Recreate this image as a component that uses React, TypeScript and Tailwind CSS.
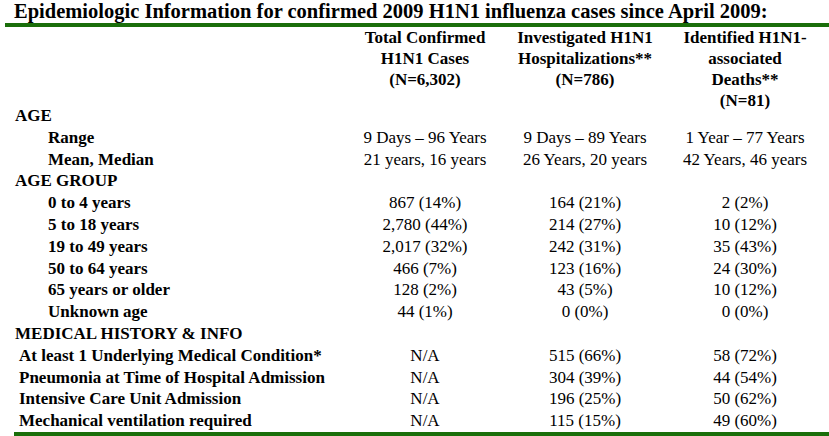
const columns = [
  { lines: ["Total Confirmed", "H1N1 Cases", "(N=6,302)"] },
  { lines: ["Investigated H1N1", "Hospitalizations**", "(N=786)"] },
  { lines: ["Identified H1N1-", "associated", "Deaths**", "(N=81)"] },
];

type Row = { label: string; kind: "section" | "sub" | "item"; values?: string[] };

const rows: Row[] = [
  { label: "AGE", kind: "section" },
  { label: "Range", kind: "sub", values: ["9 Days – 96 Years", "9 Days – 89 Years", "1 Year – 77 Years"] },
  { label: "Mean, Median", kind: "sub", values: ["21 years, 16 years", "26 Years, 20 years", "42 Years, 46 years"] },
  { label: "AGE GROUP", kind: "section" },
  { label: "0 to 4 years", kind: "sub", values: ["867 (14%)", "164 (21%)", "2 (2%)"] },
  { label: "5 to 18 years", kind: "sub", values: ["2,780 (44%)", "214 (27%)", "10 (12%)"] },
  { label: "19 to 49 years", kind: "sub", values: ["2,017 (32%)", "242 (31%)", "35 (43%)"] },
  { label: "50 to 64 years", kind: "sub", values: ["466 (7%)", "123 (16%)", "24 (30%)"] },
  { label: "65 years or older", kind: "sub", values: ["128 (2%)", "43 (5%)", "10 (12%)"] },
  { label: "Unknown age", kind: "sub", values: ["44 (1%)", "0 (0%)", "0 (0%)"] },
  { label: "MEDICAL HISTORY & INFO", kind: "section" },
  { label: "At least 1 Underlying Medical Condition*", kind: "item", values: ["N/A", "515 (66%)", "58 (72%)"] },
  { label: "Pneumonia at Time of Hospital Admission", kind: "item", values: ["N/A", "304 (39%)", "44 (54%)"] },
  { label: "Intensive Care Unit Admission", kind: "item", values: ["N/A", "196 (25%)", "50 (62%)"] },
  { label: "Mechanical ventilation required", kind: "item", values: ["N/A", "115 (15%)", "49 (60%)"] },
];

const labelPad = {
  section: "pl-[15px]",
  sub: "pl-[48px]",
  item: "pl-[19px]",
};

export default function App() {
  return (
    <div className="w-[829px] h-[436px] bg-white text-black overflow-hidden font-['Liberation_Serif','Times_New_Roman',serif]">
      <h1 className="pl-[14px] h-[23px] text-[20.5px] leading-[22px] font-bold whitespace-nowrap">
        Epidemiologic Information for confirmed 2009 H1N1 influenza cases since April 2009:
      </h1>
      <div className="ml-[5px] h-[4px] bg-[#1a6e0a]" />

      <div className="grid grid-cols-[345px_160px_160px_160px] h-[78px] text-[17px] leading-[21px] font-bold">
        <div />
        {columns.map((col) => (
          <div key={col.lines[0]} className="flex flex-col items-center">
            {col.lines.map((line) => (
              <span key={line} className="whitespace-nowrap">{line}</span>
            ))}
          </div>
        ))}
      </div>

      <div className="flex flex-col">
        {rows.map((row) => (
          <div key={row.label} className="grid grid-cols-[345px_160px_160px_160px] h-[21.8px] leading-[21.8px] text-[17px]">
            <div className={`${labelPad[row.kind]} font-bold whitespace-nowrap`}>{row.label}</div>
            {(row.values ?? ["", "", ""]).map((v, i) => (
              <div key={i} className="text-center whitespace-nowrap">{v}</div>
            ))}
          </div>
        ))}
      </div>

      <div className="ml-[14px] h-[4px] bg-[#1a6e0a]" />
    </div>
  );
}
